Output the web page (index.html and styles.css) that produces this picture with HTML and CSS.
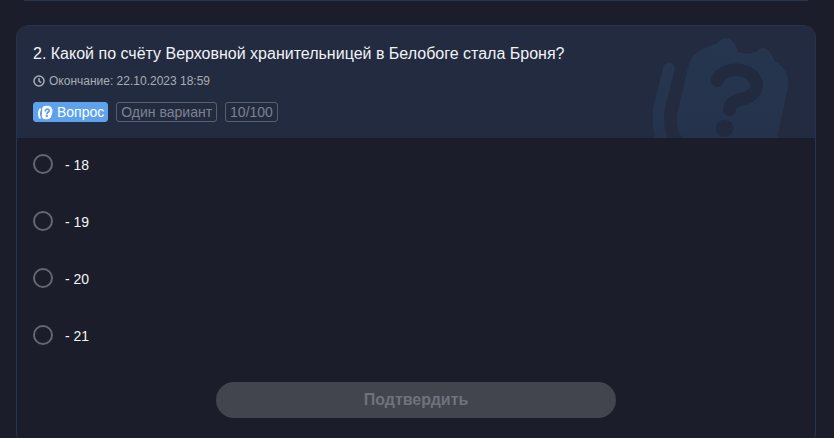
FILE: index.html
```html
<!DOCTYPE html>
<html>
<head>
    <meta name="viewport" content="width=device-width, initial-scale=1">
    <link rel="stylesheet" href="styles.css">
</head>
<body>
    <div class="page">
        <div class="prev-card"></div>

        <div class="card">
            <div class="card-head">
                <svg class="watermark" viewBox="0 78 585 336">
                    <defs>
                        <linearGradient id="mark-fade" x1="0" y1="0" x2="0" y2="1">
                            <stop class="fade-top" offset="0"/>
                            <stop class="fade-bottom" offset="1"/>
                        </linearGradient>
                    </defs>
                    <path class="mark-blob" d="M172 340 L205 200 Q215 150 290 132 Q310 108 330 118 Q345 130 355 155 Q390 172 425 145 Q445 140 465 185 Q505 205 505 255 L470 420 L190 420 Q165 380 172 340 Z"/>
                    <path class="mark-slash" d="M147 205 L118 320 Q108 370 125 420"/>
                    <path class="mark-q" d="M292 242 C305 205 365 200 395 225 C425 255 405 285 375 295 C345 303 330 305 328 330"/>
                    <circle class="mark-dot" cx="314" cy="385" r="26"/>
                </svg>
                <h2 class="title">2. Какой по счёту Верховной хранительницей в Белобоге стала Броня?</h2>
                <div class="deadline">
                    <svg class="clock" viewBox="0 0 12 12">
                        <circle cx="6" cy="6" r="5"/>
                        <path d="M6 3 V6.2 L8.2 7.6"/>
                    </svg>
                    <span>Окончание: 22.10.2023 18:59</span>
                </div>
                <div class="tags">
                    <span class="tag tag-main">
                        <svg class="tag-icon" viewBox="0 0 14 14">
                            <path class="tag-icon-blob" d="M4 2.4 Q6 .2 7.8 .8 Q10.8 .2 12.6 2.4 Q14 4.6 13.4 7 L12 11.6 Q9.5 13.8 7 13.2 Q4 13.2 3.6 10.8 Z"/>
                            <path class="tag-icon-slash" d="M2 4 Q-.2 8 1.8 12"/>
                            <path class="tag-icon-q" d="M6.8 5.4 Q7.4 3.6 9 3.8 Q11 4.4 10.2 6.2 Q8.6 6.8 8.4 8"/>
                            <circle class="tag-icon-dot" cx="8.2" cy="10.2" r="1.1"/>
                        </svg>
                        <span>Вопрос</span>
                    </span>
                    <span class="tag">Один вариант</span>
                    <span class="tag">10/100</span>
                </div>
            </div>

            <div class="options">
                <label class="option"><span class="radio"></span><span class="option-text">- 18</span></label>
                <label class="option"><span class="radio"></span><span class="option-text">- 19</span></label>
                <label class="option"><span class="radio"></span><span class="option-text">- 20</span></label>
                <label class="option"><span class="radio"></span><span class="option-text">- 21</span></label>
            </div>

            <div class="actions">
                <button class="submit" disabled>Подтвердить</button>
            </div>
        </div>
    </div>
</body>
</html>
```

FILE: styles.css
```css
body {
    font-family: "Liberation Sans", Arial, sans-serif;
    margin: 0;
    padding: 0;
    background-color: #1b1d2a;
}

/* The card runs on below the fold */
.page {
    height: 100vh;
    padding: 0 18px 0 16px;
    box-sizing: border-box;
    overflow: hidden;
}

/* Bottom edge of the card above */
.prev-card {
    height: 1px;
    margin: 0 8px 24px;
    background-color: #27344e;
}

.card {
    border: 1px solid #26344f;
    border-radius: 12px;
    height: 420px;
    box-sizing: border-box;
    overflow: hidden;
}

.card-head {
    position: relative;
    height: 112px;
    padding: 18px 16px 0;
    box-sizing: border-box;
    background-color: #232b40;
    overflow: hidden;
}

.watermark {
    position: absolute;
    top: 0;
    right: 0;
    width: 195px;
    height: 112px;
}

.fade-top {
    stop-color: #26364f;
}

.fade-bottom {
    stop-color: #25324b;
}

.mark-blob {
    fill: url(#mark-fade);
}

.mark-slash {
    fill: none;
    stroke: url(#mark-fade);
    stroke-width: 34;
    stroke-linecap: round;
}

.mark-q {
    fill: none;
    stroke: #222a3f;
    stroke-width: 38;
    stroke-linecap: round;
}

.mark-dot {
    fill: #222a3f;
}

.title {
    position: relative;
    margin: 0;
    font-size: 16px;
    font-weight: normal;
    line-height: 20px;
    color: #f1f3f6;
}

.deadline {
    position: relative;
    display: flex;
    align-items: center;
    gap: 4px;
    margin-top: 9px;
    font-size: 12px;
    line-height: 16px;
    color: #a9adb6;
}

.clock {
    width: 12px;
    height: 12px;
    fill: none;
    stroke: #a9adb6;
    stroke-width: 1.5;
}

.tags {
    position: relative;
    display: flex;
    gap: 8px;
    margin-top: 13px;
}

.tag {
    display: flex;
    align-items: center;
    height: 20px;
    padding: 0 4px;
    border: 1px solid #5a5f6e;
    border-radius: 3px;
    box-sizing: border-box;
    font-size: 14px;
    color: #7d8290;
}

.tag-main {
    gap: 4px;
    padding-right: 3px;
    border-color: #5ea2ec;
    background-color: #5ea2ec;
    color: #fff;
}

.tag-icon {
    width: 15px;
    height: 15px;
    overflow: visible;
}

.tag-icon-blob {
    fill: #fff;
}

.tag-icon-slash {
    fill: none;
    stroke: #fff;
    stroke-width: 1.8;
    stroke-linecap: round;
}

.tag-icon-q {
    fill: none;
    stroke: #5ea2ec;
    stroke-width: 1.6;
    stroke-linecap: round;
}

.tag-icon-dot {
    fill: #5ea2ec;
}

.options {
    display: flex;
    flex-direction: column;
    gap: 37px;
    padding: 16px 16px 0;
}

.option {
    display: flex;
    align-items: flex-start;
    gap: 12px;
    height: 20px;
    font-size: 14px;
    line-height: 20px;
    color: #f4f5f7;
}

.option-text {
    margin-top: 1px;
}

.radio {
    width: 20px;
    height: 20px;
    border: 2px solid #64676f;
    border-radius: 50%;
    box-sizing: border-box;
}

.actions {
    display: flex;
    justify-content: center;
    margin-top: 37px;
}

.submit {
    width: 400px;
    height: 36px;
    border: 0;
    border-radius: 18px;
    background-color: #42444e;
    color: #6f727c;
    font-family: inherit;
    font-size: 16px;
    font-weight: bold;
}
```
